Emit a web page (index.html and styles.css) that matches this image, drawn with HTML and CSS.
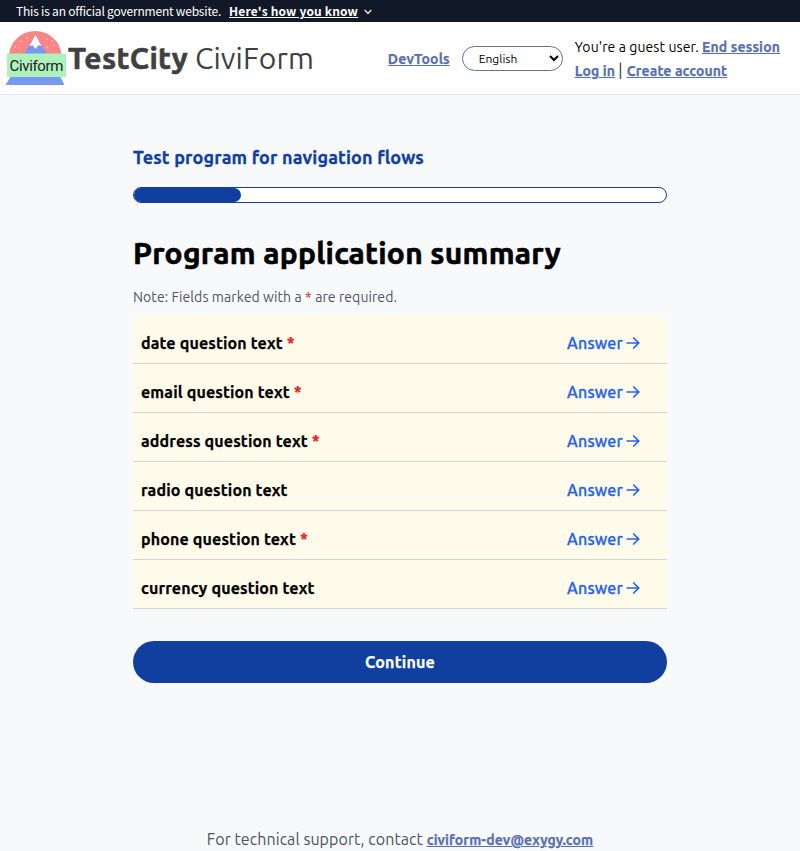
FILE: index.html
```html
<!DOCTYPE html>
<html lang="en">
<head>
<meta charset="utf-8">
<title>Program application summary</title>
<link rel="stylesheet" href="styles.css">
</head>
<body>
<div class="banner"><span class="banner-text">This is an official government website.</span><a class="banner-link">Here's how you know</a>
<svg class="chevron" width="8" height="6" viewBox="0 0 8 6"><path d="M.7 1 4 4.300 7.300 1" fill="none" stroke="#fff" stroke-width="1.2"/></svg></div>
<header class="header">
  <div class="brand">
    <svg class="logo" width="62" height="58" viewBox="0 0 62 58">
      <path d="M3 26a26.300 25.500 0 0 1 52.500 0z" fill="#fa8585"/>
      <path d="M18 25 29.500 6 41 25z" fill="#7799f0"/>
      <path d="M23.500 17 29.500 6l6 11-3-1-3 4-3-4z" fill="#fff"/>
      <path d="M5 47h49l4.500 9H-.5z" fill="#7799f0"/>
      <g fill="#fdd"><circle cx="15" cy="12" r=".8"/><circle cx="21" cy="9" r=".8"/><circle cx="13" cy="19" r=".8"/><circle cx="9" cy="18" r=".8"/><circle cx="41" cy="10" r=".8"/><circle cx="46" cy="12" r=".8"/><circle cx="41" cy="18" r=".8"/><circle cx="48" cy="16" r=".8"/></g>
      <path d="M1 24.500h59V48H1z" fill="#adf2bd"/>
      <text x="3.500" y="42" textLength="54" class="logo-text">Civiform</text>
    </svg>
    <div class="name"><b>TestCity</b> <span>CiviForm</span></div>
  </div>
  <div class="tools">
    <a class="link dev">DevTools</a>
    <select class="language" aria-label="Language"><option>English</option></select>
    <div class="account">
      <div><span class="guest">You're a guest user.</span> <a class="link">End session</a></div>
      <div><a class="link log">Log in</a> <span class="bar">|</span> <a class="link create">Create account</a></div>
    </div>
  </div>
</header>
<main class="main">
  <h2 class="program">Test program for navigation flows</h2>
  <div class="progress"><div class="progress-fill"></div></div>
  <h1 class="heading">Program application summary</h1>
  <p class="note">Note: Fields marked with a <i class="req">*</i> are required.</p>
  <div class="row"><span class="question">date question text <i class="req">*</i></span><a class="answer">Answer<svg width="14" height="14" viewBox="0 0 14 14"><path d="M.5 7h12M7.200 1.500 12.700 7 7.200 12.500"/></svg></a></div>
  <div class="row"><span class="question">email question text <i class="req">*</i></span><a class="answer">Answer<svg width="14" height="14" viewBox="0 0 14 14"><path d="M.5 7h12M7.200 1.500 12.700 7 7.200 12.500"/></svg></a></div>
  <div class="row"><span class="question">address question text <i class="req">*</i></span><a class="answer">Answer<svg width="14" height="14" viewBox="0 0 14 14"><path d="M.5 7h12M7.200 1.500 12.700 7 7.200 12.500"/></svg></a></div>
  <div class="row"><span class="question">radio question text</span><a class="answer">Answer<svg width="14" height="14" viewBox="0 0 14 14"><path d="M.5 7h12M7.200 1.500 12.700 7 7.200 12.500"/></svg></a></div>
  <div class="row"><span class="question">phone question text <i class="req">*</i></span><a class="answer">Answer<svg width="14" height="14" viewBox="0 0 14 14"><path d="M.5 7h12M7.200 1.500 12.700 7 7.200 12.500"/></svg></a></div>
  <div class="row"><span class="question">currency question text</span><a class="answer">Answer<svg width="14" height="14" viewBox="0 0 14 14"><path d="M.5 7h12M7.200 1.500 12.700 7 7.200 12.500"/></svg></a></div>
  <button class="continue">Continue</button>
</main>
<footer class="footer">For technical support, contact <a class="link mail">civiform-dev@exygy.com</a></footer>
</body>
</html>
```
FILE: styles.css
```css
* { box-sizing: border-box; }
body { display: flex; flex-direction: column; height: 852px; margin: 0; overflow: hidden; background: #f8f9fb; color: #000; font: 16px/24px Ubuntu, "Noto Sans", sans-serif; }
.banner { display: flex; align-items: center; height: 22px; padding-left: 16px; background: #111827; color: #fff; font: 12px/22px "Noto Sans CJK SC", sans-serif; }
.banner-text { letter-spacing: -0.2px; }
.banner-link { margin-left: 8px; font-weight: 700; letter-spacing: 0.16px; text-decoration: underline; }
.chevron { margin: 2px 0 0 6px; }
.header { display: flex; justify-content: space-between; height: 73px; padding: 0 20px 0 6px; background: #fff; border-bottom: 1px solid #e5e7eb; }
.brand, .tools { display: flex; align-items: center; }
.logo { margin-right: 0; }
.logo-text { font: 15px Roboto, sans-serif; fill: #222; }
.name { font-size: 30px; color: #404040; white-space: nowrap; letter-spacing: 0.11px; }
.name b { letter-spacing: 0.38px; -webkit-text-stroke: 0.6px; }
.tools { gap: 12px; font-size: 14px; }
.dev { margin-top: 1px; }
.link { color: #5a6fae; font-size: 14px; font-weight: 700; text-decoration: underline; letter-spacing: 0.125px; -webkit-text-stroke: 0.25px; }
.guest { letter-spacing: 0.093px; }
.log { letter-spacing: 0.08px; }
.create { margin-left: 1px; letter-spacing: 0.09px; }
.bar { color: #333; font-size: 16px; line-height: 20px; }
.language { width: 101px; height: 25px; border: 1px solid #6b7280; border-radius: 13px; background: #fff; color: #000; padding: 0 0 0 12px; font: 12px Ubuntu, "Noto Sans", sans-serif; }
.account { margin-top: 2px; white-space: nowrap; }
.main { width: 534px; margin: 0 auto; }
.program { margin: 48px 0 0; font-size: 18px; line-height: 28px; color: #113f9f; letter-spacing: 0.146px; -webkit-text-stroke: 0.3px; }
.progress { height: 16px; margin-top: 16px; border: 1px solid #113f9f; border-radius: 8px; background: #fff; }
.progress-fill { width: 107px; height: 14px; background: #113f9f; border-radius: 7px; }
.heading { margin: 32px 0 0; font-size: 30px; line-height: 36px; letter-spacing: 0.255px; -webkit-text-stroke: 0.6px; }
.note { margin: 14px 0 6px; font-size: 14px; color: #4b5563; letter-spacing: 0.092px; }
.req { color: #dc2626; font-style: normal; }
.row { display: flex; justify-content: space-between; height: 49px; background: #fffbeb; border-bottom: 1px solid #d1d5db; padding: 16px 27px 0 8px; }
.question { font-weight: 700; letter-spacing: 0.145px; -webkit-text-stroke: 0.25px; }
.answer { display: flex; align-items: center; height: 24px; gap: 3px; color: #2563eb; font-weight: 500; letter-spacing: 0.18px; -webkit-text-stroke: 0.3px; }
.answer svg { fill: none; stroke: #2563eb; stroke-width: 1.7; }
.continue { width: 534px; height: 42px; margin-top: 32px; border: 0; border-radius: 21px; background: #113f9f; color: #fff; font: 700 16px Ubuntu, "Noto Sans", sans-serif; letter-spacing: 0.2px; -webkit-text-stroke: 0.25px; }
.footer { margin-top: auto; text-align: center; color: #4b5563; letter-spacing: 0.07px; }
.mail { letter-spacing: 0.1px; }
```
